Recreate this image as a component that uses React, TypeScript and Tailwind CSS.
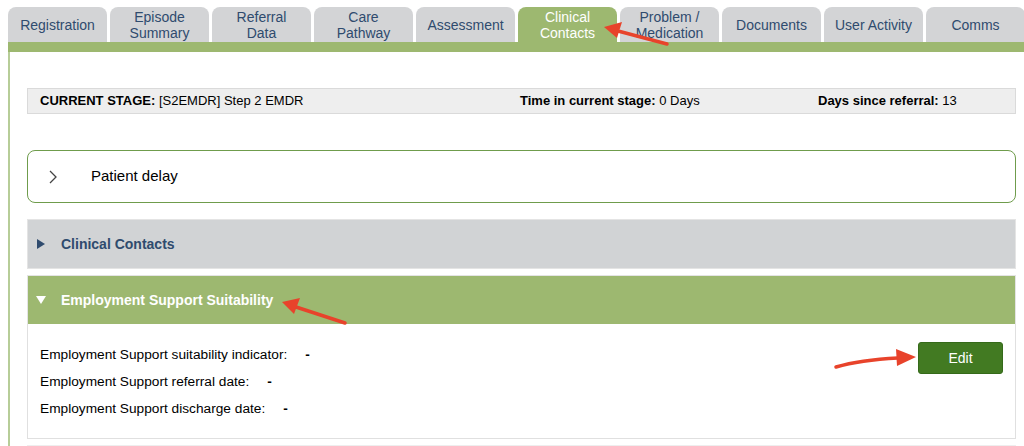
import React from "react";

const tabs = [
  ["Registration"],
  ["Episode", "Summary"],
  ["Referral", "Data"],
  ["Care", "Pathway"],
  ["Assessment"],
  ["Clinical", "Contacts"],
  ["Problem /", "Medication"],
  ["Documents"],
  ["User Activity"],
  ["Comms"],
];

const details = [
  ["Employment Support suitability indicator:", "-"],
  ["Employment Support referral date:", "-"],
  ["Employment Support discharge date:", "-"],
];

const Arrows: React.FC = () => (
  <svg className="absolute left-0 top-0 pointer-events-none" width="1024" height="446" viewBox="0 0 1024 446">
    <g stroke="#e8432b" strokeWidth="3.5" fill="none" strokeLinecap="round">
      <path d="M667 44 L618 31" />
      <path d="M345 323 L296 307" />
      <path d="M836 367 Q860 360 898 358" />
    </g>
    <g fill="#e8432b">
      <polygon points="604,27 622,22 617,38" />
      <polygon points="282,302 300,298 294,314" />
      <polygon points="916,357 896,349 897,366" />
    </g>
  </svg>
);

const App: React.FC = () => {
  return (
    <div
      className="relative w-[1024px] h-[446px] overflow-hidden bg-white"
      style={{ fontFamily: '"Liberation Sans", Arial, sans-serif' }}
    >
      <div className="flex gap-[3px] pl-[8px] pt-[7px]">
        {tabs.map((t, i) => {
          const active = i === 5;
          return (
            <div
              key={t.join(" ")}
              className={`w-[99px] h-[35px] shrink-0 rounded-t-[8px] flex flex-col items-center justify-center text-[14px] leading-[16px] ${
                active ? "bg-[#9db870] text-white" : "bg-[#d3d4d6] text-[#2f4b6e]"
              }`}
            >
              {t.map((l) => (
                <span key={l}>{l}</span>
              ))}
            </div>
          );
        })}
      </div>
      <div className="ml-[8px] h-[10px] bg-[#9db870]" />
      <div className="ml-[8px] border-l-2 border-[#b7cd98] pl-[17px] pr-[8px] pt-[36px] h-[400px]">
        <div className="h-[26px] bg-[#eeeeee] border border-[#dadada] flex items-center text-[13px] text-black px-[12px]">
          <div className="w-[480px]">
            <b>CURRENT STAGE:</b> [S2EMDR] Step 2 EMDR
          </div>
          <div className="w-[298px]">
            <b>Time in current stage:</b> 0 Days
          </div>
          <div>
            <b>Days since referral:</b> 13
          </div>
        </div>

        <div className="mt-[36px] h-[53px] rounded-[8px] border border-[#6f9c4c] flex items-center">
          <svg className="ml-[20px]" width="10" height="16" viewBox="0 0 10 16">
            <path d="M2 2 L8 8 L2 14" stroke="#444" strokeWidth="1.3" fill="none" />
          </svg>
          <span className="ml-[33px] text-[15px] text-black">Patient delay</span>
        </div>

        <div className="mt-[16px] h-[50px] bg-[#d1d3d5] border border-[#e4e4e4] flex items-center">
          <svg className="ml-[9px]" width="8" height="10" viewBox="0 0 8 10">
            <polygon points="0,0 8,5 0,10" fill="#2f4b6e" />
          </svg>
          <span className="ml-[16px] text-[14px] font-bold text-[#2f4b6e]">Clinical Contacts</span>
        </div>

        <div className="mt-[6px] h-[49px] bg-[#9db870] border border-[#e4e4e4] border-b-0 flex items-center">
          <svg className="ml-[8px]" width="10" height="8" viewBox="0 0 10 8">
            <polygon points="0,0 10,0 5,8" fill="#ffffff" />
          </svg>
          <span className="ml-[15px] text-[14px] font-bold text-white">Employment Support Suitability</span>
        </div>

        <div className="h-[115px] border border-[#e0e0e0] border-t-0 flex justify-between pl-[12px] pr-[12px] pt-[18px]">
          <div className="flex flex-col gap-[9px] pt-[4px] text-[13.7px] text-black leading-[18px]">
            {details.map(([k, v]) => (
              <div key={k}>
                {k}
                <span className="ml-[18px] font-bold">{v}</span>
              </div>
            ))}
          </div>
          <button className="w-[85px] h-[32px] rounded-[3px] bg-[#427a22] border border-[#356a1a] text-white text-[14px]">
            Edit
          </button>
        </div>
        <div className="mt-[6px] h-[10px] bg-[#eeeeee]" />
      </div>
      <Arrows />
    </div>
  );
};

export default App;
